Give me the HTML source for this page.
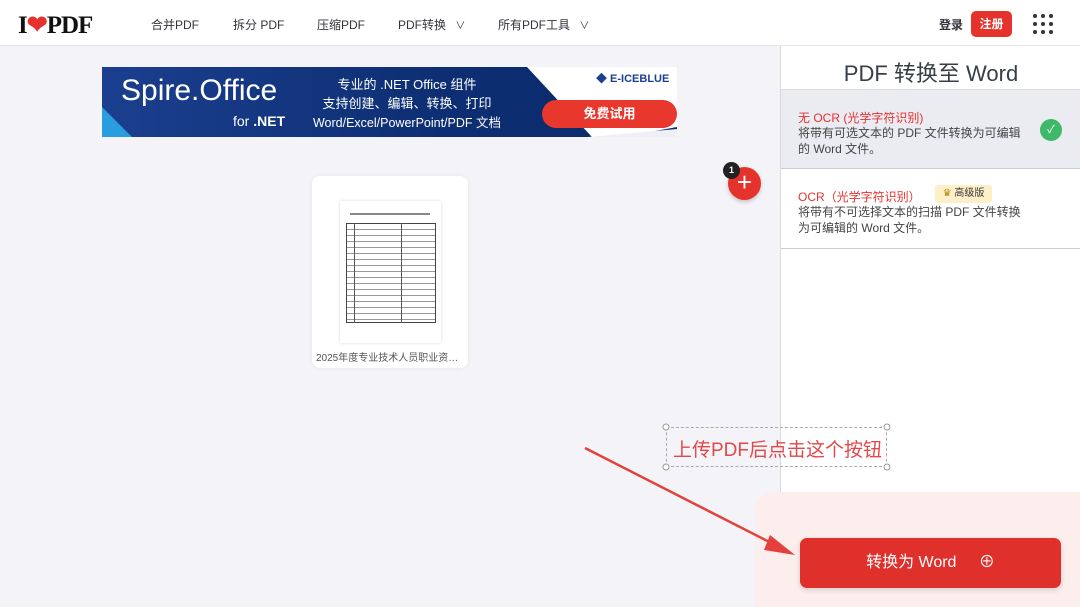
<!DOCTYPE html>
<html><head><meta charset="utf-8"><style>
*{margin:0;padding:0;box-sizing:border-box}
body{width:1080px;height:607px;overflow:hidden;background:#f4f4f8;font-family:"Liberation Sans","Noto Sans CJK SC",sans-serif;position:relative;color:#383e45}
.hdr{position:absolute;left:0;top:0;width:1080px;height:46px;background:#fff;border-bottom:1px solid #e4e4ea}
.logo{position:absolute;left:18px;top:10px;font-family:"Liberation Serif",serif;font-weight:900;font-size:25px;color:#111;letter-spacing:-1px}
.nav{position:absolute;top:16px;font-size:12px;color:#33333b}
.side{position:absolute;left:780px;top:46px;width:300px;height:561px;background:#fff;border-left:1px solid #d8d8de}
.pink{position:absolute;left:755px;top:492px;width:325px;height:115px;background:#fdeeee;border-radius:18px 0 0 0}
</style></head><body>
<div class="hdr">
<div class="logo">I<span style="color:#e5322d">❤</span>PDF</div>
<div class="nav" style="left:151px">合并PDF</div>
<div class="nav" style="left:233px">拆分 PDF</div>
<div class="nav" style="left:317px">压缩PDF</div>
<div class="nav" style="left:398px">PDF转换 <span style="font-size:10px;margin-left:6px">∨</span></div>
<div class="nav" style="left:498px">所有PDF工具 <span style="font-size:10px;margin-left:6px">∨</span></div>
<div class="nav" style="left:939px;font-weight:bold">登录</div>
<div style="position:absolute;left:971px;top:11px;width:41px;height:26px;background:#e5322d;border-radius:5px;color:#fff;font-size:12px;font-weight:bold;text-align:center;line-height:26px">注册</div>
<svg style="position:absolute;left:1032px;top:13px" width="22" height="22" fill="#333"><g><circle cx="3" cy="3" r="2"/><circle cx="11" cy="3" r="2"/><circle cx="19" cy="3" r="2"/><circle cx="3" cy="11" r="2"/><circle cx="11" cy="11" r="2"/><circle cx="19" cy="11" r="2"/><circle cx="3" cy="19" r="2"/><circle cx="11" cy="19" r="2"/><circle cx="19" cy="19" r="2"/></g></svg>
</div>
<!-- banner -->
<div style="position:absolute;left:102px;top:67px;width:575px;height:70px;background:linear-gradient(90deg,#1b3f8f,#0d2e72 60%,#0c2a6e);overflow:hidden">
<div style="position:absolute;left:0;top:40px;width:30px;height:30px;background:#2a9de0;clip-path:polygon(0 0,0 100%,100% 100%)"></div>
<div style="position:absolute;left:0;top:0;width:575px;height:70px;background:#fff;clip-path:polygon(425px 0,575px 0,575px 60px,520px 70px,490px 70px)"></div>
<div style="position:absolute;left:0;top:0;width:575px;height:70px;background:#eef0f5;clip-path:polygon(486px 70px,575px 62px,575px 70px)"></div>
<div style="position:absolute;left:19px;top:7px;color:#fff;font-size:30px">Spire.Office</div>
<div style="position:absolute;left:131px;top:46px;color:#fff;font-size:14px">for <b>.NET</b></div>
<div style="position:absolute;left:200px;top:8px;width:210px;text-align:center;color:#fff;font-size:13px;line-height:19px">专业的 .NET Office 组件<br>支持创建、编辑、转换、打印<br><span style="font-size:12.5px">Word/Excel/PowerPoint/PDF 文档</span></div>
<div style="position:absolute;left:494px;top:3px;color:#1b3f8f;font-size:11px;font-weight:bold">◆ E-ICEBLUE</div>
<div style="position:absolute;left:440px;top:33px;width:135px;height:28px;background:#e8372d;border-radius:14px;color:#fff;font-weight:bold;font-size:13px;text-align:center;line-height:28px">免费试用</div>
</div>
<!-- file card -->
<div style="position:absolute;left:312px;top:176px;width:156px;height:192px;background:#fff;border-radius:8px;box-shadow:0 0 6px rgba(0,0,0,.06)">
<div style="position:absolute;left:28px;top:25px;width:101px;height:142px;background:#fff;box-shadow:0 0 3px rgba(0,0,0,.15)">
<div style="position:absolute;left:10px;top:12px;width:80px;height:2px;background:#888"></div>
<div style="position:absolute;left:6px;top:22px;width:90px;height:100px;border:1px solid #444;background:repeating-linear-gradient(#fff 0,#fff 5px,#999 5px,#999 6px)"></div>
<div style="position:absolute;left:14px;top:22px;width:1px;height:100px;background:#555"></div>
<div style="position:absolute;left:61px;top:22px;width:1px;height:100px;background:#555"></div>
</div>
<div style="position:absolute;left:4px;top:173px;width:148px;text-align:center;font-size:10px;color:#555;white-space:nowrap;overflow:hidden;text-overflow:ellipsis">2025年度专业技术人员职业资格…</div>
</div>
<div style="position:absolute;left:728px;top:167px;width:33px;height:33px;border-radius:50%;background:#e5322d;color:#fff;font-size:26px;text-align:center;line-height:31px;box-shadow:0 2px 4px rgba(0,0,0,.2)">+</div>
<div style="position:absolute;left:723px;top:162px;width:17px;height:17px;border-radius:50%;background:#222;color:#fff;font-size:9px;font-weight:bold;text-align:center;line-height:17px">1</div>
<!-- side -->
<div class="side">
<div style="position:absolute;top:10px;width:300px;text-align:center;font-size:22px;color:#383e45">PDF 转换至 Word</div>
<div style="position:absolute;top:43px;width:300px;height:80px;background:#ebebf2;border-top:1px solid #ddd;border-bottom:1px solid #ccc"></div>
<div style="position:absolute;left:17px;top:63px;font-size:12px;color:#e5322d">无 OCR (光学字符识别)</div>
<div style="position:absolute;left:17px;top:79px;font-size:12px;line-height:16px;color:#444;width:240px">将带有可选文本的 PDF 文件转换为可编辑<br>的 Word 文件。</div>
<div style="position:absolute;left:259px;top:73px;width:22px;height:22px;border-radius:50%;background:#3fb86a;color:#fff;font-size:11px;text-align:center;line-height:22px">✓</div>
<div style="position:absolute;left:17px;top:142px;font-size:12px;color:#e5322d">OCR（光学字符识别）</div>
<div style="position:absolute;left:154px;top:139px;width:57px;height:18px;background:#fdefc8;border-radius:3px;font-size:10px;color:#333;text-align:center;line-height:18px"><span style="color:#b8860b">♛</span> 高级版</div>
<div style="position:absolute;left:17px;top:158px;font-size:12px;line-height:16px;color:#444">将带有不可选择文本的扫描 PDF 文件转换<br>为可编辑的 Word 文件。</div>
<div style="position:absolute;top:202px;width:300px;height:1px;background:#ccc"></div>
</div>
<div class="pink"></div>
<div style="position:absolute;left:800px;top:538px;width:261px;height:50px;background:#e0302b;border-radius:7px;color:#fff;font-size:16px;text-align:center;line-height:50px;box-shadow:0 2px 6px rgba(0,0,0,.15)">转换为 Word <span style="margin-left:18px">⊕</span></div>
<!-- annotation -->
<div style="position:absolute;left:666px;top:427px;width:221px;height:40px;border:1px dashed #aaa"></div>
<div style="position:absolute;left:673px;top:435px;font-size:19px;color:#e0484a">上传PDF后点击这个按钮</div>
<svg style="position:absolute;left:0;top:0" width="1080" height="607"><line x1="585" y1="448" x2="785" y2="550" stroke="#e5413c" stroke-width="2.5"/><polygon points="795,555 770,535 764,550" fill="#e5413c"/>
<g fill="#fff" stroke="#999"><circle cx="666" cy="427" r="3"/><circle cx="887" cy="427" r="3"/><circle cx="666" cy="467" r="3"/><circle cx="887" cy="467" r="3"/></g></svg>
</body></html>
